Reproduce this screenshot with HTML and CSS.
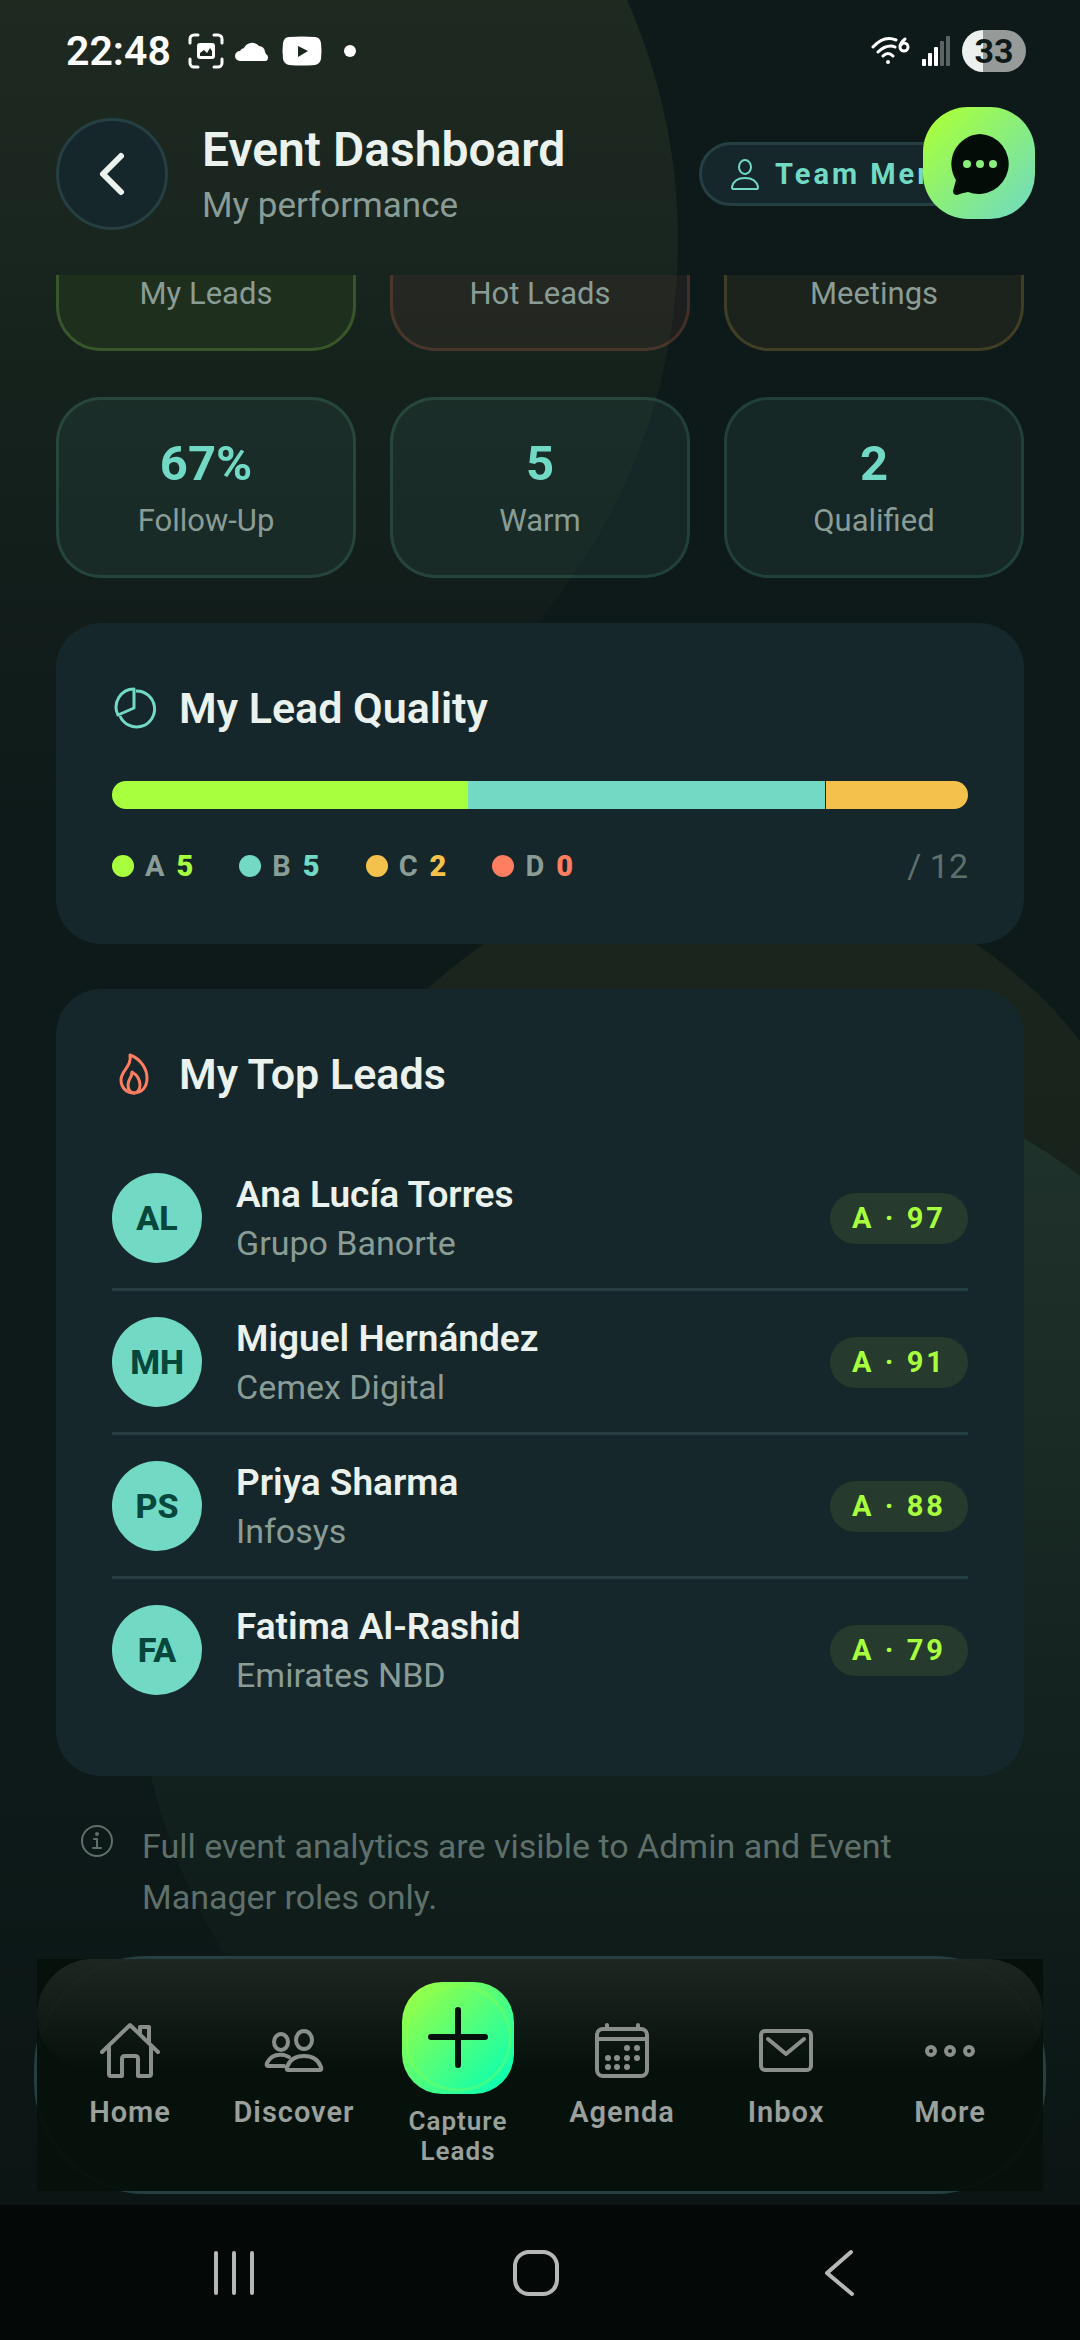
FILE: index.html
```html
<!DOCTYPE html>
<html lang="en">
<head>
  <meta charset="UTF-8" />
  <meta name="viewport" content="width=device-width, initial-scale=1" />
  <title>Event Dashboard</title>
  <link rel="stylesheet" href="styles.css">
</head>
<body>

<!-- background orbs -->
<svg class="orbs" width="1080" height="2340" viewBox="0 0 1080 2340" aria-hidden="true">
  <defs>
    <linearGradient id="orb-lime" x1="0" y1="0" x2="0" y2="830" gradientUnits="userSpaceOnUse">
      <stop offset="0" stop-color="#1e2920" />
      <stop offset="0.3" stop-color="#19251f" />
      <stop offset="0.45" stop-color="#15221c" />
      <stop offset="0.75" stop-color="#121d1b" />
      <stop offset="1" stop-color="#0e1a19" />
    </linearGradient>
    <linearGradient id="orb-olive" x1="0" y1="870" x2="0" y2="1760" gradientUnits="userSpaceOnUse">
      <stop offset="0" stop-color="#1c261d" />
      <stop offset="0.4" stop-color="#17221c" />
      <stop offset="1" stop-color="#111c1b" />
    </linearGradient>
    <linearGradient id="orb-teal" x1="0" y1="1056" x2="0" y2="2200" gradientUnits="userSpaceOnUse">
      <stop offset="0" stop-color="#20342c" />
      <stop offset="0.3" stop-color="#1b2b25" />
      <stop offset="0.63" stop-color="#12201e" />
      <stop offset="1" stop-color="#0a1514" />
    </linearGradient>
  </defs>
  <circle cx="88" cy="240" r="590" fill="url(#orb-lime)" />
  <circle cx="730" cy="1314" r="444" fill="url(#orb-olive)" />
  <circle cx="724" cy="1644" r="588" fill="url(#orb-teal)" />
</svg>

<div class="status-bar">
  <div class="status-left">
    <span class="clock">22:48</span>
    <svg width="36" height="36" viewBox="0 0 36 36" fill="none" stroke="#fff" stroke-width="3" stroke-linecap="round">
      <path d="M2 10V6a4 4 0 0 1 4-4h4M26 2h4a4 4 0 0 1 4 4v4M34 26v4a4 4 0 0 1-4 4h-4M10 34H6a4 4 0 0 1-4-4v-4" />
      <rect x="9" y="10" width="18" height="16" rx="3" fill="#fff" stroke="none" />
      <path d="M12 23v-3l4-3 3 3 3-5 2 3v5z" fill="#1a261e" stroke="none" />
    </svg>
    <svg width="36" height="20" viewBox="0 0 36 20" fill="#fff">
      <path d="M5 20a5 5 0 0 1 0-10 5 5 0 0 1 4-3 9 9 0 0 1 15-2 6 6 0 0 1 6 6l1 2a4 4 0 0 1 0 7z" />
    </svg>
    <svg width="40" height="30" viewBox="0 0 40 30">
      <path d="M7 1Q20 0 33 1q5 0 6 6 1 8 0 16-1 5-6 6-13 1-26 0-5-1-6-6-1-8 0-16 1-6 6-6z" fill="#fff" />
      <path d="M16 10v11l10-6z" fill="#1a261e" />
    </svg>
    <span class="status-dot"></span>
  </div>
  <div class="status-right">
    <svg width="40" height="30" viewBox="0 0 40 30" fill="none" stroke="#fff" stroke-width="3" stroke-linecap="round">
      <path d="M3 11Q14 -1 26 4M8 16q6-6 13-6 2 0 4 1M13 20q5-5 10 0" />
      <circle cx="18" cy="26" r="2" fill="#fff" stroke="none" />
      <path d="M35 3q-5 4-5 8a4 4 0 1 0 4-4q-2 0-3 2" stroke-width="3" />
    </svg>
    <svg width="28" height="32" viewBox="0 0 28 32" fill="#fff">
      <rect x="0" y="24" width="4" height="7" rx="1" />
      <rect x="6" y="18" width="4" height="13" rx="1" />
      <rect x="12" y="12" width="4" height="19" rx="1" />
      <rect x="18" y="6" width="4" height="25" rx="1" fill="#5c6463" />
      <rect x="24" y="1" width="4" height="30" rx="1" fill="#5c6463" />
    </svg>
    <span class="battery">33</span>
  </div>
</div>

<header class="header">
  <button class="back" type="button" aria-label="Back">
    <svg width="32" height="48" viewBox="0 0 32 48" fill="none" stroke="#ebf2ee" stroke-width="6" stroke-linecap="round" stroke-linejoin="round">
      <path d="M25 6 7 24l18 18" />
    </svg>
  </button>
  <div class="header-text">
    <h1>Event Dashboard</h1>
    <p>My performance</p>
  </div>
  <div class="role">
    <svg width="30" height="32" viewBox="0 0 30 32" fill="none" stroke="#72dac4" stroke-width="2" stroke-linejoin="round">
      <ellipse cx="15" cy="9" rx="6" ry="7" />
      <path d="M3 31q-1 0-1-2 2-9 13-9t13 9q0 2-1 2z" />
    </svg>
    <span>Team Member</span>
  </div>
</header>

<button class="chat" type="button" aria-label="Chat">
  <svg width="64" height="64" viewBox="0 0 64 64">
    <path d="M33 3a30 30 0 1 1-12 58q-6 1-11 3-4 0-4-4l3-11A30 30 0 0 1 33 3z" fill="#040c08" />
    <g fill="#8aee7c">
      <circle cx="20" cy="33" r="4" />
      <circle cx="33" cy="33" r="4" />
      <circle cx="46" cy="33" r="4" />
    </g>
  </svg>
</button>

<main class="content">
  <section class="stats">
    <div class="stat lime"><span class="label">My Leads</span></div>
    <div class="stat coral"><span class="label">Hot Leads</span></div>
    <div class="stat amber"><span class="label">Meetings</span></div>
    <div class="stat"><strong>67%</strong><span class="label">Follow-Up</span></div>
    <div class="stat"><strong>5</strong><span class="label">Warm</span></div>
    <div class="stat"><strong>2</strong><span class="label">Qualified</span></div>
  </section>

  <section class="card">
    <h2>
      <svg width="45" height="45" viewBox="0 0 45 45" fill="none" stroke="#72dac4" stroke-width="3" stroke-linejoin="round">
        <path d="M22 3v19L6 29A18 18 0 0 1 22 3z" />
        <path d="M24 5A18 18 0 1 1 8 30" />
      </svg>
      My Lead Quality
    </h2>
    <div class="bar">
      <span class="seg seg-a" style="flex-grow: 5"></span>
      <span class="seg seg-b" style="flex-grow: 5"></span>
      <span class="seg seg-c" style="flex-grow: 2"></span>
    </div>
    <div class="legend">
      <span class="key key-a"><i></i>A <b>5</b></span>
      <span class="key key-b"><i></i>B <b>5</b></span>
      <span class="key key-c"><i></i>C <b>2</b></span>
      <span class="key key-d"><i></i>D <b>0</b></span>
      <span class="total">/ 12</span>
    </div>
  </section>

  <section class="card">
    <h2>
      <svg width="45" height="45" viewBox="0 0 45 45" fill="none" stroke="#ff7d60" stroke-width="3" stroke-linejoin="round">
        <path d="M18 3c11 4 17 14 17 23 0 9-5 15-13 15S9 35 9 28c0-10 11-13 9-25z" />
        <path d="M20 20c5 3 8 8 8 13 0 5-3 8-6 8s-6-3-6-8c0-6 4-7 4-13z" />
      </svg>
      My Top Leads
    </h2>
    <ul class="leads">
      <li>
        <span class="avatar">AL</span>
        <div class="who"><strong>Ana Lucía Torres</strong><span>Grupo Banorte</span></div>
        <span class="score">A · 97</span>
      </li>
      <li>
        <span class="avatar">MH</span>
        <div class="who"><strong>Miguel Hernández</strong><span>Cemex Digital</span></div>
        <span class="score">A · 91</span>
      </li>
      <li>
        <span class="avatar">PS</span>
        <div class="who"><strong>Priya Sharma</strong><span>Infosys</span></div>
        <span class="score">A · 88</span>
      </li>
      <li>
        <span class="avatar">FA</span>
        <div class="who"><strong>Fatima Al-Rashid</strong><span>Emirates NBD</span></div>
        <span class="score">A · 79</span>
      </li>
    </ul>
  </section>

  <div class="note">
    <svg width="34" height="34" viewBox="0 0 34 34" fill="none" stroke="#5f706b" stroke-width="2" stroke-linecap="round" stroke-linejoin="round">
      <circle cx="17" cy="17" r="15" />
      <path d="M14 15h3v9M13 24h8" />
      <circle cx="17" cy="10" r="1" fill="#5f706b" />
    </svg>
    <p>Full event analytics are visible to Admin and Event Manager roles only.</p>
  </div>
</main>

<nav class="tabs">
  <div class="tabs-inner">
    <a class="tab" href="#home">
      <svg class="icon" viewBox="0 0 60 60">
        <path d="M2 31 30 4l28 27M40 13V6h9v15M9 26v27q0 2 2 2h11V38q0-3 3-3h10q3 0 3 3v17h11q2 0 2-2V26" />
      </svg>
      <span>Home</span>
    </a>
    <a class="tab" href="#discover">
      <svg class="icon" viewBox="0 0 60 60">
        <ellipse cx="17" cy="21" rx="7" ry="8" />
        <ellipse cx="40" cy="19" rx="8" ry="9" />
        <path d="M24 49q-2 0-1-3 4-11 17-11t17 11q1 3-1 3z" />
        <path d="M20 45H4q-2 0-1-3 5-10 17-8l5 2" />
      </svg>
      <span>Discover</span>
    </a>
    <a class="tab capture" href="#capture">
      <span class="plus">
        <svg width="112" height="112" viewBox="0 0 112 112" fill="none">
          <circle cx="56" cy="56" r="52" stroke="#a4ff3c" stroke-opacity="0.25" stroke-width="3" />
          <path d="M56 28v55M29 55h54" stroke="#04120c" stroke-width="6" stroke-linecap="round" />
        </svg>
      </span>
      <span>Capture<br>Leads</span>
    </a>
    <a class="tab" href="#agenda">
      <svg class="icon" viewBox="0 0 60 60">
        <rect x="5" y="8" width="50" height="47" rx="6" />
        <path d="M5 18h50M15 4v4M46 4v4" />
        <g class="dots">
          <circle cx="35" cy="27" r="3" /><circle cx="45" cy="27" r="3" />
          <circle cx="16" cy="37" r="3" /><circle cx="25" cy="37" r="3" /><circle cx="35" cy="37" r="3" /><circle cx="45" cy="37" r="3" />
          <circle cx="16" cy="46" r="3" /><circle cx="25" cy="46" r="3" /><circle cx="35" cy="46" r="3" />
        </g>
      </svg>
      <span>Agenda</span>
    </a>
    <a class="tab" href="#inbox">
      <svg class="icon" viewBox="0 0 60 60">
        <rect x="5" y="10" width="50" height="39" rx="4" />
        <path d="M12 18 30 33 48 18" />
      </svg>
      <span>Inbox</span>
    </a>
    <a class="tab" href="#more">
      <svg class="icon" viewBox="0 0 60 60">
        <circle cx="11" cy="30" r="4" /><circle cx="30" cy="30" r="4" /><circle cx="49" cy="30" r="4" />
      </svg>
      <span>More</span>
    </a>
  </div>
</nav>

<div class="system-nav">
  <button type="button" aria-label="Recent apps">
    <svg viewBox="0 0 48 48"><path d="M6 4v40M24 4v40M42 4v40" /></svg>
  </button>
  <button type="button" aria-label="Home screen">
    <svg viewBox="0 0 48 48"><rect x="3" y="3" width="42" height="42" rx="14" /></svg>
  </button>
  <button type="button" aria-label="System back">
    <svg viewBox="0 0 48 48"><path d="M36 3 12 24l25 21" /></svg>
  </button>
</div>

</body>
</html>
```

FILE: styles.css
```css
* {
  box-sizing: border-box;
}
body {
  margin: 0;
  height: 100vh;
  display: flex;
  flex-direction: column;
  overflow: hidden;
  position: relative;
  background: linear-gradient(#0e1a1a, #0e1919 75%, #0a1413);
  font-family: Roboto, "Noto Sans", sans-serif;
  color: #ebf2ee;
}
h1, h2, p, ul {
  margin: 0;
  padding: 0;
}
button {
  border: none;
  padding: 0;
  background: none;
  font: inherit;
  cursor: pointer;
}
svg {
  display: block;
  flex-shrink: 0;
}
.orbs {
  position: absolute;
  top: 0;
  left: 0;
  z-index: -1;
}

/* status bar */
.status-bar {
  height: 102px;
  padding: 0 54px 0 66px;
  display: flex;
  align-items: center;
  justify-content: space-between;
  flex-shrink: 0;
}
.status-left, .status-right {
  display: flex;
  align-items: center;
}
.status-left {
  gap: 11px;
}
.status-right {
  gap: 12px;
}
.clock {
  font-size: 41px;
  font-weight: 600;
  color: #fff;
  margin-right: 6px;
}
.status-dot {
  width: 12px;
  height: 12px;
  margin-left: 11px;
  border-radius: 50%;
  background: #fff;
}
.battery {
  width: 64px;
  height: 42px;
  border-radius: 21px;
  background: linear-gradient(90deg, #ecf0ef 33%, #969b9a 33%);
  color: #0e1a1a;
  font-size: 34px;
  font-weight: 700;
  line-height: 42px;
  text-align: center;
}

/* header */
.header {
  padding: 16px 56px 45px;
  display: flex;
  align-items: center;
  gap: 34px;
  flex-shrink: 0;
}
.back {
  width: 112px;
  height: 112px;
  border: 3px solid #263f43;
  border-radius: 50%;
  background: #15272a;
  display: flex;
  align-items: center;
  justify-content: center;
}
.header-text {
  flex: 1;
}
h1 {
  font-size: 48px;
  font-weight: 600;
  line-height: 60px;
}
.header-text p {
  margin-top: 4px;
  font-size: 35px;
  line-height: 44px;
  color: #8a9c96;
}
.role {
  height: 64px;
  padding: 0 24px 0 28px;
  border: 3px solid #263f43;
  border-radius: 32px;
  background: #15272a;
  display: flex;
  align-items: center;
  gap: 15px;
  color: #72dac4;
  font-size: 29px;
  font-weight: 700;
  letter-spacing: 3px;
  white-space: nowrap;
}
.chat {
  position: absolute;
  top: 107px;
  right: 45px;
  width: 112px;
  height: 112px;
  border-radius: 45px;
  background: linear-gradient(135deg, #a8ff3e 10%, #8aee7c 50%, #6edac6);
  display: flex;
  align-items: center;
  justify-content: center;
}

/* content sits at the end of its scroll range */
.content {
  flex: 1;
  min-height: 0;
  overflow: hidden;
  padding: 0 56px 33px;
  display: flex;
  flex-direction: column;
  justify-content: flex-end;
  gap: 45px;
}
.content > * {
  flex-shrink: 0;
}
.stats {
  display: grid;
  grid-template-columns: repeat(3, 1fr);
  grid-auto-rows: 1fr;
  gap: 46px 34px;
}
.stat {
  padding: 34px 0 32px;
  border: 3px solid rgba(114, 218, 196, 0.2);
  border-radius: 45px;
  background: rgba(114, 218, 196, 0.07);
  background-clip: padding-box;
  display: flex;
  flex-direction: column;
  justify-content: flex-end;
  text-align: center;
}
.stat strong {
  font-size: 49px;
  font-weight: 700;
  line-height: 60px;
  color: #72dac4;
  margin-bottom: 5px;
}
.label {
  font-size: 31px;
  line-height: 44px;
  color: #8a9c96;
}
.stat.lime {
  border-color: #38562a;
  background-color: #1f2f1e;
}
.stat.coral {
  border-color: rgba(255, 125, 96, 0.22);
  background-color: rgba(255, 125, 96, 0.06);
}
.stat.amber {
  border-color: rgba(244, 194, 76, 0.22);
  background-color: rgba(244, 194, 76, 0.06);
}

.card {
  padding: 56px;
  border-radius: 45px;
  background: #15272a;
}
h2 {
  display: flex;
  align-items: center;
  gap: 22px;
  margin-bottom: 44px;
  font-size: 43px;
  font-weight: 600;
  line-height: 58px;
}
.bar {
  height: 28px;
  border-radius: 14px;
  overflow: hidden;
  display: flex;
}
.seg {
  flex-basis: 0;
}
.seg-a {
  background: #a8ff3e;
}
.seg-b {
  background: #72dac4;
}
.seg-c {
  background: #f4c24c;
  border-left: 1px solid #15272a;
}
.legend {
  margin-top: 35px;
  display: flex;
  align-items: center;
  gap: 45px;
  line-height: 44px;
}
.key {
  display: flex;
  align-items: center;
  gap: 11px;
  font-size: 29px;
  font-weight: 700;
  letter-spacing: 1px;
  color: #8a9c96;
}
.key i {
  width: 22px;
  height: 22px;
  border-radius: 50%;
}
.key-a i {
  background: #a8ff3e;
}
.key-b i {
  background: #72dac4;
}
.key-c i {
  background: #f4c24c;
}
.key-d i {
  background: #ff7d60;
}
.key-a b {
  color: #a8ff3e;
}
.key-b b {
  color: #72dac4;
}
.key-c b {
  color: #f4c24c;
}
.key-d b {
  color: #ff7d60;
}
.total {
  margin-left: auto;
  font-size: 34px;
  color: #5f706b;
}

.leads {
  list-style: none;
}
.leads li {
  padding: 26px 0 25px;
  display: flex;
  align-items: center;
  gap: 34px;
  border-bottom: 3px solid #263f43;
}
.leads li:last-child {
  border-bottom: none;
}
.avatar {
  width: 90px;
  height: 90px;
  border-radius: 50%;
  background: #72dac4;
  color: #08473b;
  font-size: 34px;
  font-weight: 800;
  line-height: 90px;
  text-align: center;
}
.who {
  flex: 1;
  display: flex;
  flex-direction: column;
  gap: 6px;
}
.who strong {
  font-size: 37px;
  font-weight: 600;
  line-height: 44px;
}
.who span {
  font-size: 34px;
  line-height: 40px;
  color: #8a9c96;
}
.score {
  padding: 0 22px;
  border-radius: 26px;
  background: #263a2d;
  color: #a8ff3e;
  font-size: 29px;
  font-weight: 700;
  line-height: 51px;
  letter-spacing: 3px;
}

.note {
  padding: 0 24px;
  display: flex;
  gap: 28px;
  color: #5f706b;
}
.note svg {
  margin-top: 3px;
}
.note p {
  font-size: 34px;
  line-height: 51px;
}

/* bottom tabs */
.tabs {
  margin: 0 34px 11px;
  border: 3px solid #263f43;
  border-radius: 112px;
  flex-shrink: 0;
}
.tabs-inner {
  position: relative;
  padding: 0 11px 25px;
  background: rgba(7, 17, 11, 0.94);
  display: flex;
  align-items: flex-start;
}
.tabs-inner::before {
  content: "";
  position: absolute;
  top: 0;
  left: 0;
  right: 0;
  height: 112px;
  border-radius: 56px;
  background: linear-gradient(rgba(255, 255, 255, 0.09), rgba(255, 255, 255, 0));
}
.tab {
  flex: 1;
  position: relative;
  padding-top: 62px;
  display: flex;
  flex-direction: column;
  align-items: center;
  gap: 14px;
  color: #9aa09c;
  font-size: 29px;
  font-weight: 600;
  line-height: 34px;
  letter-spacing: 1px;
  text-align: center;
  text-decoration: none;
}
.icon {
  width: 60px;
  height: 60px;
  fill: none;
  stroke: #8a8f8c;
  stroke-width: 4;
  stroke-linecap: round;
  stroke-linejoin: round;
}
.icon .dots {
  fill: #8a8f8c;
  stroke: none;
}
.capture {
  padding-top: 23px;
  gap: 12px;
  font-size: 26px;
  line-height: 30px;
}
.plus {
  border-radius: 40px;
  background: linear-gradient(135deg, #a4ff3c, #0fffae 90%);
}

.system-nav {
  height: 135px;
  padding: 0 90px 0 83px;
  background: #040908;
  display: flex;
  align-items: center;
  flex-shrink: 0;
}
.system-nav button {
  flex: 1;
  display: flex;
  justify-content: center;
}
.system-nav svg {
  width: 48px;
  height: 48px;
  fill: none;
  stroke: #b5b8b6;
  stroke-width: 4;
  stroke-linecap: round;
  stroke-linejoin: round;
}
```
